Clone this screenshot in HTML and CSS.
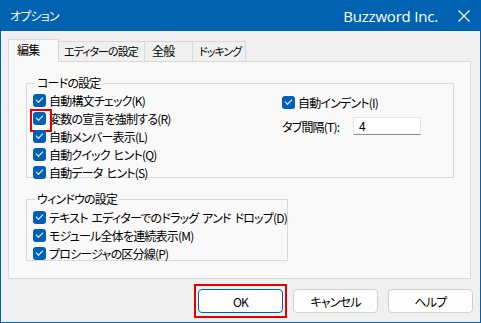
FILE: index.html
```html
<!DOCTYPE html>
<html lang="ja">
<head>
    <meta charset="UTF-8">
    <title>オプション</title>
    <link rel="stylesheet" href="styles.css">
</head>
<body>
    <div class="window">
        <div class="titlebar">
            <span class="title">オプション</span>
            <span class="brand">Buzzword Inc.</span>
            <svg class="close" width="12" height="12" viewBox="0 0 12 12">
                <path d="M0.5 0.5 L11.5 11.5 M11.5 0.5 L0.5 11.5" stroke="#fff" stroke-width="1.1" fill="none"/>
            </svg>
        </div>
        <div class="body">
            <div class="tabs">
                <div class="tab active t1">編集</div>
                <div class="tab t2">エディターの設定</div>
                <div class="tab t3">全般</div>
                <div class="tab t4">ドッキング</div>
            </div>
            <div class="panel">
                <fieldset class="group code">
                    <legend>コードの設定</legend>
                    <div class="cols">
                        <div class="col">
                            <label class="chk"><span class="box"></span>自動構文チェック(K)</label>
                            <label class="chk"><span class="box marked"></span>変数の宣言を強制する(R)</label>
                            <label class="chk"><span class="box"></span>自動メンバー表示(L)</label>
                            <label class="chk"><span class="box"></span>自動クイック ヒント(Q)</label>
                            <label class="chk"><span class="box"></span>自動データ ヒント(S)</label>
                        </div>
                        <div class="col right">
                            <label class="chk"><span class="box"></span>自動インデント(I)</label>
                            <div class="tabsize">
                                <span>タブ間隔(T):</span>
                                <div class="input">4</div>
                            </div>
                        </div>
                    </div>
                </fieldset>
                <fieldset class="group window-set">
                    <legend>ウィンドウの設定</legend>
                    <label class="chk"><span class="box"></span>テキスト エディターでのドラッグ アンド ドロップ(D)</label>
                    <label class="chk"><span class="box"></span>モジュール全体を連続表示(M)</label>
                    <label class="chk"><span class="box"></span>プロシージャの区分線(P)</label>
                </fieldset>
            </div>
            <div class="buttons">
                <div class="marker"><button class="btn default">OK</button></div>
                <button class="btn">キャンセル</button>
                <button class="btn">ヘルプ</button>
            </div>
        </div>
    </div>
</body>
</html>
```

FILE: styles.css
```css
*{
    box-sizing: border-box;
}
body{
    margin: 0;
    font-family: "Noto Sans CJK JP", "Noto Sans", sans-serif;
    font-size: 12px;
    font-feature-settings: "palt";
    letter-spacing: -0.8px;
    word-spacing: 2px;
    color: #000;
    background: #fff;
}
.window{
    width: 481px;
    height: 323px;
    border: 1px solid #0063b1;
    border-top: none;
    background: #f0f0f0;
    display: flex;
    flex-direction: column;
    overflow: hidden;
}
.titlebar{
    height: 31px;
    margin: 0 -1px;
    background: #0063b1;
    color: #fff;
    display: flex;
    align-items: center;
    padding: 0 11px 0 10px;
}
.title{
    font-size: 12px;
    flex: 1;
}
.brand{
    font-family: "Open Sans", "Noto Sans", sans-serif;
    font-size: 15px;
    letter-spacing: -0.2px;
    word-spacing: 0;
    margin-right: 20px;
}
.close{
    display: block;
}
.body{
    flex: 1;
    padding: 8px 7px 0 7px;
}
.tabs{
    display: flex;
    align-items: flex-end;
    height: 22px;
}
.tab{
    height: 20px;
    line-height: 18px;
    border: 1px solid #d9d9d9;
    border-bottom: none;
    border-left: none;
    background: #f0f0f0;
    padding-left: 7px;
    white-space: nowrap;
    overflow: hidden;
}
.tab.active{
    height: 23px;
    margin-bottom: -1px;
    border-left: 1px solid #d9d9d9;
    background: #f9f9f9;
    position: relative;
    line-height: 20px;
    padding-left: 8px;
}
.t1{ width: 51px; }
.t2{
    width: 86px;
    font-size: 11px;
    letter-spacing: -1px;
    padding-left: 5px;
}
.t3{ width: 48px; }
.t4{
    width: 53px;
    font-size: 11px;
    letter-spacing: -1px;
    padding-left: 6px;
}
.panel{
    width: 463px;
    height: 218px;
    border: 1px solid #d9d9d9;
    background: #f9f9f9;
    padding: 13px 0 0 17px;
}
.group{
    margin: 0;
    border: 1px solid #d9d9d9;
    padding: 0 0 0 6px;
}
.group legend{
    padding: 0 2px;
    margin-left: 2px;
    line-height: 16px;
}
.code{
    width: 428px;
    height: 103px;
}
.window-set{
    width: 258px;
    height: 70px;
    margin-top: 13px;
    padding-top: 1px;
}
.cols{
    display: flex;
}
.col{
    width: 249px;
}
.col.right{
    width: auto;
    padding-top: 2px;
}
.chk{
    display: flex;
    align-items: center;
    height: 18px;
    white-space: pre;
}
.box{
    width: 13px;
    height: 13px;
    margin-right: 3px;
    border-radius: 3px;
    background: #005fb8;
    position: relative;
    flex: none;
}
.box::after{
    content: "";
    position: absolute;
    left: 3px;
    top: 3px;
    width: 6px;
    height: 3px;
    border-left: 1px solid #fff;
    border-bottom: 1px solid #fff;
    transform: rotate(-45deg);
}
.box.marked::before{
    content: "";
    position: absolute;
    left: -3px;
    top: -3px;
    width: 18px;
    height: 19px;
    border: 2px solid #e60000;
}
.tabsize{
    display: flex;
    align-items: center;
    margin-top: 6px;
}
.tabsize span{
    width: 71px;
}
.input{
    width: 68px;
    height: 18px;
    background: #fff;
    border: 1px solid #e5e5e5;
    border-bottom: 1px solid #8a8a8a;
    padding-left: 5px;
    line-height: 16px;
}
.buttons{
    display: flex;
    justify-content: flex-end;
    align-items: center;
    gap: 10px;
    margin-top: 5px;
}
.marker{
    border: 2px solid #e60000;
    padding: 3px 2px;
    margin-right: -4px;
}
.btn{
    width: 85px;
    height: 24px;
    border: 1px solid #d0d0d0;
    border-radius: 4px;
    background: #fdfdfd;
    font-family: "Noto Sans CJK JP", "Noto Sans", sans-serif;
    font-size: 12px;
    font-feature-settings: "palt";
    letter-spacing: -0.8px;
    color: #000;
    padding: 0;
    display: block;
}
.btn.default{
    border-color: #0063b1;
}
```
